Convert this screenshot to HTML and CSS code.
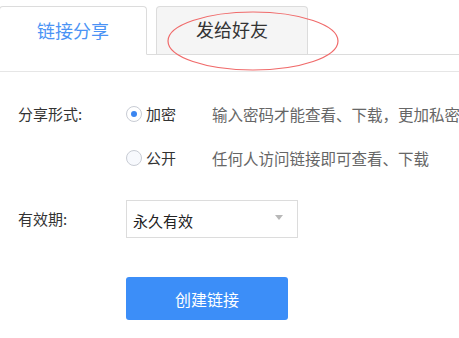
FILE: index.html
```html
<!DOCTYPE html>
<html lang="zh-CN">
<head>
<meta charset="utf-8">
<link rel="stylesheet" href="styles.css">
</head>
<body>
<div class="page">
  <div class="tabs">
    <div class="tab tab-active">链接分享</div>
    <div class="tab tab-other">发给好友</div>
    <svg class="mark" width="180" height="66" viewBox="0 0 180 66">
      <ellipse cx="89" cy="33" rx="85" ry="29" fill="none" stroke="#f06a6a" stroke-width="1.2"/>
    </svg>
  </div>
  <div class="panel">
    <div class="row">
      <div class="label">分享形式:</div>
      <div class="option"><span class="radio radio-on"></span><span class="opt-text">加密</span></div>
      <div class="desc">输入密码才能查看、下载，更加私密</div>
    </div>
    <div class="row row-second">
      <div class="label"></div>
      <div class="option"><span class="radio"></span><span class="opt-text">公开</span></div>
      <div class="desc">任何人访问链接即可查看、下载</div>
    </div>
    <div class="row row-select">
      <div class="label">有效期:</div>
      <div class="select"><span class="select-text">永久有效</span><span class="arrow"></span></div>
    </div>
    <div class="row row-button">
      <div class="label"></div>
      <button class="btn">创建链接</button>
    </div>
  </div>
</div>
</body>
</html>
```

FILE: styles.css
```css
* { box-sizing: border-box; }
html, body { margin: 0; padding: 0; background: #fff; }
body {
  font-family: "Noto Sans CJK SC", "Noto Sans", sans-serif;
  color: #333;
  overflow: hidden;
  width: 459px;
  height: 338px;
}
.page { position: relative; }
.tabs {
  position: relative;
  display: flex;
  padding-top: 6px;
  height: 55px;
  border-bottom: 1px solid #dcdcdc;
}
.tab {
  height: 49px;
  border: 1px solid #dcdcdc;
  border-radius: 4px 4px 0 0;
  font-size: 18px;
  display: flex;
  align-items: center;
  justify-content: center;
}
.tab-active {
  width: 148px;
  margin-left: -1px;
  background: #fff;
  border-bottom-color: #fff;
  color: #4b93f5;
  padding-bottom: 2px;
}
.tab-other {
  width: 152px;
  height: 48px;
  margin-left: 9px;
  background: #f5f5f5;
  color: #333;
  border-bottom: none;
  padding-bottom: 4px;
}
.mark {
  position: absolute;
  left: 164px;
  top: 8px;
}
.panel {
  margin-top: 16px;
  border-top: 1px solid #e6e6e6;
  padding-top: 32px;
  padding-left: 18px;
}
.row {
  display: flex;
  align-items: center;
  height: 20px;
  font-size: 15px;
  line-height: 20px;
}
.row-second { margin-top: 24px; }
.row-select { margin-top: 32px; height: 38px; }
.row-button { margin-top: 39px; height: 43px; }
.label {
  width: 108px;
  color: #333;
  flex: none;
}
.option {
  width: 86px;
  display: flex;
  align-items: center;
  flex: none;
}
.radio {
  width: 16px;
  height: 16px;
  border-radius: 50%;
  border: 1px solid #c8ccd4;
  background: #f7f9fd;
  position: relative;
  flex: none;
}
.radio-on { background: #fff; }
.radio-on::after {
  content: "";
  position: absolute;
  left: 4px;
  top: 4px;
  width: 6px;
  height: 6px;
  border-radius: 50%;
  background: #3b86f0;
}
.opt-text { margin-left: 4px; color: #333; }
.desc { color: #666; white-space: nowrap; font-size: 15.5px; }
.select {
  width: 172px;
  height: 38px;
  border: 1px solid #dcdcdc;
  display: flex;
  align-items: center;
  justify-content: space-between;
  padding: 0 14px 0 6px;
}
.select-text { color: #222; font-size: 15px; padding-top: 4px; }
.arrow {
  width: 0;
  height: 0;
  border-left: 4px solid transparent;
  border-right: 4px solid transparent;
  border-top: 5px solid #b8b8b8;
  margin-top: -4px;
}
.btn {
  width: 162px;
  height: 43px;
  border: none;
  border-radius: 3px;
  background: #3c8ef8;
  color: #fff;
  font-family: "Noto Sans CJK SC", "Noto Sans", sans-serif;
  font-size: 16px;
  padding: 0;
}
```
